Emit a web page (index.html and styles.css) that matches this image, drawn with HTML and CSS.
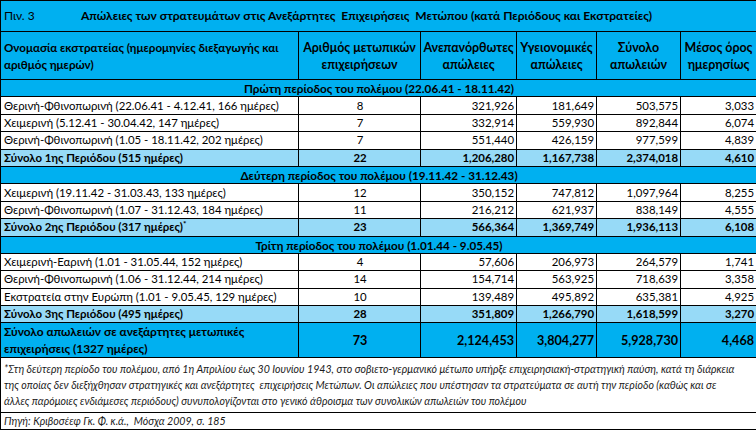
FILE: index.html
```html
<!DOCTYPE html>
<html lang="el">
<head>
<meta charset="utf-8">
<title>Πιν. 3</title>
<link rel="stylesheet" href="styles.css">
</head>
<body>
<table class="sheet">
  <colgroup>
    <col class="c1"><col class="c2"><col class="c3"><col class="c4"><col class="c5"><col class="c6">
  </colgroup>
  <tr class="title-row">
    <td colspan="6" class="title"><span class="tab-no">Πιν. 3</span><span class="tab-title">Απώλειες των στρατευμάτων στις Ανεξάρτητες&nbsp; Επιχειρήσεις&nbsp; Μετώπου (κατά Περιόδους και Εκστρατείες)</span></td>
  </tr>
  <tr class="head-row">
    <th class="name">Ονομασία εκστρατείας (ημερομηνίες διεξαγωγής και<br>αριθμός ημερών)</th>
    <th>Αριθμός μετωπικών επιχειρήσεων</th>
    <th>Ανεπανόρθωτες απώλειες</th>
    <th>Υγειονομικές απώλειες</th>
    <th>Σύνολο απωλειών</th>
    <th>Μέσος όρος ημερησίως</th>
  </tr>
  <tr class="period"><td colspan="6">Πρώτη περίοδος του πολέμου (22.06.41 - 18.11.42)</td></tr>
  <tr class="row"><td class="name">Θερινή-Φθινοπωρινή (22.06.41 - 4.12.41, 166 ημέρες)</td><td class="cnt">8</td><td class="num">321,926</td><td class="num">181,649</td><td class="num">503,575</td><td class="num">3,033</td></tr>
  <tr class="row"><td class="name">Χειμερινή (5.12.41 - 30.04.42, 147 ημέρες)</td><td class="cnt">7</td><td class="num">332,914</td><td class="num">559,930</td><td class="num">892,844</td><td class="num">6,074</td></tr>
  <tr class="row"><td class="name">Θερινή-Φθινοπωρινή (1.05 - 18.11.42, 202 ημέρες)</td><td class="cnt">7</td><td class="num">551,440</td><td class="num">426,159</td><td class="num">977,599</td><td class="num">4,839</td></tr>
  <tr class="row subtotal"><td class="name">Σύνολο 1ης Περιόδου (515 ημέρες)</td><td class="cnt">22</td><td class="num">1,206,280</td><td class="num">1,167,738</td><td class="num">2,374,018</td><td class="num">4,610</td></tr>
  <tr class="period"><td colspan="6">Δεύτερη περίοδος του πολέμου (19.11.42 - 31.12.43)</td></tr>
  <tr class="row"><td class="name">Χειμερινή (19.11.42 - 31.03.43, 133 ημέρες)</td><td class="cnt">12</td><td class="num">350,152</td><td class="num">747,812</td><td class="num">1,097,964</td><td class="num">8,255</td></tr>
  <tr class="row"><td class="name">Θερινή-Φθινοπωρινή (1.07 - 31.12.43, 184 ημέρες)</td><td class="cnt">11</td><td class="num">216,212</td><td class="num">621,937</td><td class="num">838,149</td><td class="num">4,555</td></tr>
  <tr class="row subtotal"><td class="name">Σύνολο 2ης Περιόδου (317 ημέρες)<sup>*</sup></td><td class="cnt">23</td><td class="num">566,364</td><td class="num">1,369,749</td><td class="num">1,936,113</td><td class="num">6,108</td></tr>
  <tr class="period"><td colspan="6">Τρίτη περίοδος του πολέμου (1.01.44 - 9.05.45)</td></tr>
  <tr class="row"><td class="name">Χειμερινή-Εαρινή (1.01 - 31.05.44, 152 ημέρες)</td><td class="cnt">4</td><td class="num">57,606</td><td class="num">206,973</td><td class="num">264,579</td><td class="num">1,741</td></tr>
  <tr class="row"><td class="name">Θερινή-Φθινοπωρινή (1.06 - 31.12.44, 214 ημέρες)</td><td class="cnt">14</td><td class="num">154,714</td><td class="num">563,925</td><td class="num">718,639</td><td class="num">3,358</td></tr>
  <tr class="row"><td class="name">Εκστρατεία στην Ευρώπη (1.01 - 9.05.45, 129 ημέρες)</td><td class="cnt">10</td><td class="num">139,489</td><td class="num">495,892</td><td class="num">635,381</td><td class="num">4,925</td></tr>
  <tr class="row subtotal"><td class="name">Σύνολο 3ης Περιόδου (495 ημέρες)</td><td class="cnt">28</td><td class="num">351,809</td><td class="num">1,266,790</td><td class="num">1,618,599</td><td class="num">3,270</td></tr>
  <tr class="total"><td class="name">Σύνολο απωλειών σε ανεξάρτητες μετωπικές<br>επιχειρήσεις (1327 ημέρες)</td><td class="cnt">73</td><td class="num">2,124,453</td><td class="num">3,804,277</td><td class="num">5,928,730</td><td class="num">4,468</td></tr>
  <tr class="note"><td colspan="6">*Στη δεύτερη περίοδο του πολέμου, από 1η Απριλίου έως 30 Ιουνίου 1943, στο σοβιετο-γερμανικό μέτωπο υπήρξε επιχειρησιακή-στρατηγική παύση, κατά τη διάρκεια<br>της οποίας δεν διεξήχθησαν στρατηγικές και ανεξάρτητες&nbsp; επιχειρήσεις Μετώπων. Οι απώλειες που υπέστησαν τα στρατεύματα σε αυτή την περίοδο (καθώς και σε<br>άλλες παρόμοιες ενδιάμεσες περιόδους) συνυπολογίζονται στο γενικό άθροισμα των συνολικών απωλειών του πολέμου</td></tr>
  <tr class="source"><td colspan="6">Πηγή: Κριβοσέεφ Γκ. Φ. κ.ά.,&nbsp; Μόσχα 2009, σ. 185</td></tr>
</table>
</body>
</html>
```

FILE: styles.css
```css
html, body {
  margin: 0;
  padding: 0;
  background: #ffffff;
}

.sheet {
  width: 756px;
  table-layout: fixed;
  border-collapse: collapse;
  font-family: Lato, "Noto Sans", sans-serif;
  font-size: 11.4px;
  color: #000000;
}

.c1 { width: 298px; }
.c2 { width: 122px; }
.c3 { width: 96px; }
.c4 { width: 80px; }
.c5 { width: 84px; }
.c6 { width: 76px; }

.sheet td,
.sheet th {
  border: 1px solid #000000;
  padding: 0 2px 0 3px;
  white-space: nowrap;
  overflow: hidden;
  line-height: 14px;
  vertical-align: middle;
}

.title-row { height: 31px; }

.title-row td {
  background: #00b0f0;
  font-size: 12px;
}

.tab-no {
  display: inline-block;
  width: 77px;
}

.tab-title {
  font-weight: bold;
}

.head-row { height: 48px; }

.head-row th {
  background: #00b0f0;
  font-weight: bold;
  font-size: 12.4px;
  line-height: 17px;
  text-align: center;
  white-space: normal;
  padding: 0 2px;
}

.head-row th.name {
  text-align: left;
  white-space: nowrap;
  font-size: 11.6px;
  padding-left: 3px;
}

.period { height: 17.4px; }

.period td {
  background: #00b0f0;
  font-weight: bold;
  font-size: 11.7px;
  text-align: center;
}

.row { height: 17.4px; }

.name { text-align: left; }
.cnt { text-align: center; }
.num { text-align: right; }

.subtotal td {
  background: #97daf7;
  font-weight: bold;
}

.subtotal sup {
  font-size: 8px;
  line-height: 0;
  vertical-align: 4px;
}

.total { height: 35px; }

.total td {
  background: #00b0f0;
  font-weight: bold;
  font-size: 11.9px;
  line-height: 17px;
}

.total td.cnt,
.total td.num {
  font-size: 12.6px;
}

.note { height: 55px; }

.note td {
  white-space: nowrap;
  font-style: italic;
  font-size: 10.6px;
  line-height: 16px;
  padding: 0 3px;
  color: #1a1a1a;
}

.source { height: 17px; }

.source td {
  font-style: italic;
  font-size: 10.6px;
  color: #1a1a1a;
}
```
